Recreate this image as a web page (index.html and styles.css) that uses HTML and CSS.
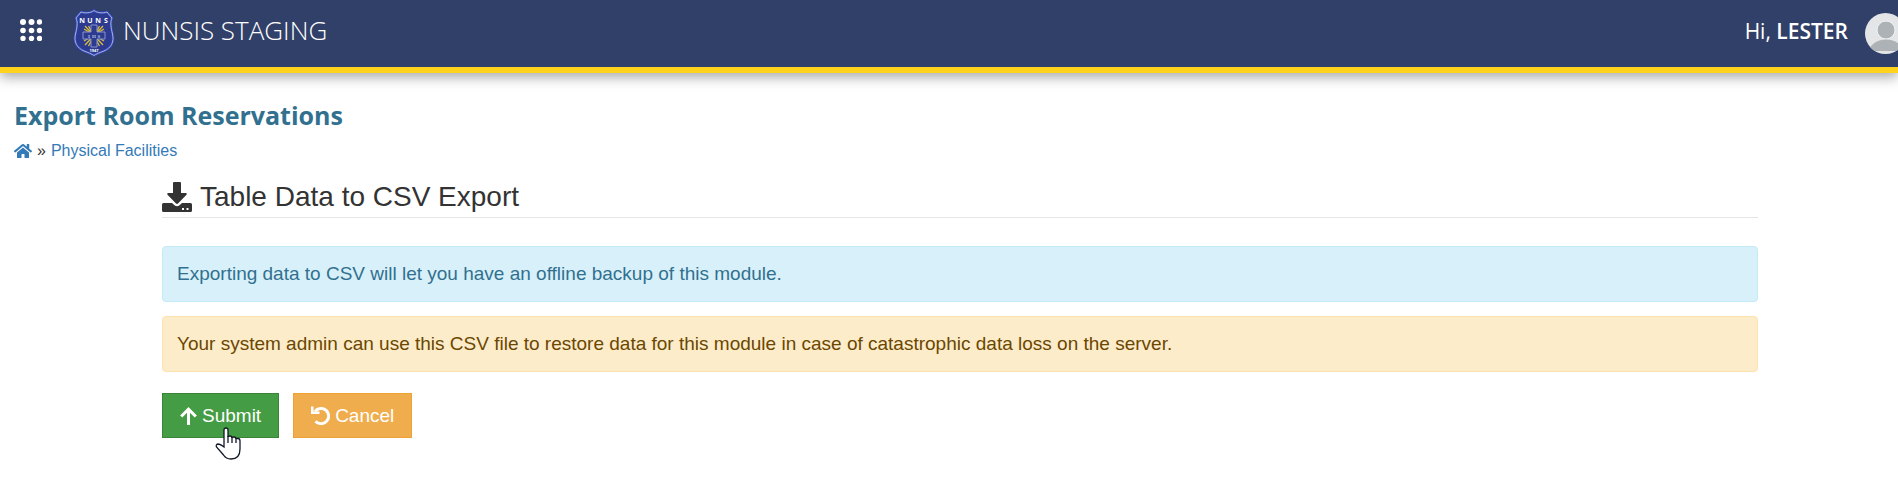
FILE: index.html
```html
<!DOCTYPE html>
<html lang="en">
<head>
    <meta charset="UTF-8">
    <title>Export Room Reservations</title>
    <link rel="stylesheet" href="styles.css">
</head>
<body>
    <header class="navbar">
        <button type="button" class="menu-btn" aria-label="Menu">
            <svg width="22" height="22" viewBox="0 0 22 22" fill="#fff">
                <circle cx="3" cy="3" r="3"/><circle cx="11.5" cy="3" r="3"/><circle cx="19.5" cy="3" r="2.7"/>
                <circle cx="3" cy="11.5" r="2.8"/><circle cx="11.5" cy="11.5" r="2.8"/><circle cx="19.5" cy="11.5" r="2.7"/>
                <circle cx="3" cy="19.5" r="2.7"/><circle cx="11.5" cy="19.5" r="2.7"/><circle cx="19.5" cy="19.5" r="2.7"/>
            </svg>
        </button>
        <a href="#" class="brand">
            <svg class="brand-logo" width="42" height="48" viewBox="0 0 42 48">
                <path d="M21 1.5C18 4 12 4.500 8 3L3 9C5 13 4 19 2.500 25C.5 33 4 39 11 42C15 43.500 19 45 21 46.500C23 45 27 43.500 31 42C38 39 41.500 33 39.500 25C38 19 37 13 39 9L34 3C30 4.500 24 4 21 1.500Z" fill="#2c3b8f" stroke="#3447b5" stroke-width="2.500"/>
                <path d="M21 1.5C18 4 12 4.500 8 3L3 9C5 13 4 19 2.500 25C.5 33 4 39 11 42C15 43.500 19 45 21 46.500C23 45 27 43.500 31 42C38 39 41.500 33 39.500 25C38 19 37 13 39 9L34 3C30 4.500 24 4 21 1.500Z" fill="none" stroke="#a9b3dc" stroke-width="1"/>
                <g stroke="#d9bd3c" stroke-width="1.300">
                    <path d="M12 17L30 36M30 17L12 36M15.500 17L26.500 37M26.500 17L15.500 37M11 20L31 32M31 20L11 32"/>
                </g>
                <path d="M18 16H24V23H32V30H24V38H18V30H10V23H18Z" fill="#2c3b8f" stroke="#8794cd" stroke-width="1"/>
                <text x="9 17 25 33" y="13.500" class="logo-name">NUNS</text>
                <text x="16 21 26" y="28.500" class="logo-ihs">IHS</text>
                <text x="21" y="43" class="logo-year">1947</text>
            </svg>
            <span>NUNSIS STAGING</span>
        </a>
        <a href="#" class="user">
            <span>Hi, <strong>LESTER</strong></span>
            <svg class="avatar" width="41" height="41" viewBox="0 0 41 41">
                <clipPath id="face"><circle cx="20.500" cy="20.500" r="20.500"/></clipPath>
                <g clip-path="url(#face)">
                    <rect width="41" height="41" fill="#e4e5e7"/>
                    <circle cx="21" cy="17" r="9" fill="#adb2b6" stroke="#f1f2f3" stroke-width="1"/>
                    <path d="M3 38C7 30 13 26.500 21 26.500S35 30 39 38Z" fill="#adb2b6"/>
                </g>
            </svg>
        </a>
    </header>

    <div class="page-head">
        <h1>Export Room Reservations</h1>
        <nav class="breadcrumb">
            <a href="#" aria-label="Home">
                <svg width="18" height="16" viewBox="0 0 576 512" fill="currentColor"><path d="M280.400 148.300L96 300.100V464a16 16 0 0 0 16 16l112-.3a16 16 0 0 0 16-16V368a16 16 0 0 1 16-16h64a16 16 0 0 1 16 16v95.600a16 16 0 0 0 16 16L464 480a16 16 0 0 0 16-16V300L295.700 148.300a12.200 12.200 0 0 0-15.300 0zM571.600 251.500L488 182.600V44.100a12 12 0 0 0-12-12h-56a12 12 0 0 0-12 12v72.600L318.500 43a48 48 0 0 0-61 0L4.300 251.500a12 12 0 0 0-1.600 16.900l25.500 31a12 12 0 0 0 16.900 1.600L280.400 107.200a12.200 12.200 0 0 1 15.300 0L531 301a12 12 0 0 0 16.900-1.600l25.500-31a12 12 0 0 0-1.800-16.900z"/></svg>
            </a>
            <span>»</span>
            <a href="#">Physical Facilities</a>
        </nav>
    </div>

    <main class="content">
        <h2>
            <svg width="30" height="30" viewBox="0 0 30 30" fill="currentColor"><path d="M11 1Q11 0 12 0H18Q19 0 19 1V11H24Q25.500 11.500 24.500 12.700L16 21.500Q15 22.300 14 21.500L5.500 12.700Q4.500 11.500 6 11H11Z"/><path d="M1.500 21H10L12.800 23.500Q15 25 17.200 23.500L20 21H28.500Q30 21 30 22.500V28.500Q30 30 28.500 30H1.500Q0 30 0 28.500V22.500Q0 21 1.500 21ZM20 26V28H22V26ZM24.500 26V28H26.500V26Z" fill-rule="evenodd"/></svg>
            Table Data to CSV Export
        </h2>
        <div class="alert alert-info">Exporting data to CSV will let you have an offline backup of this module.</div>
        <div class="alert alert-warning">Your system admin can use this CSV file to restore data for this module in case of catastrophic data loss on the server.</div>
        <form class="actions" action="#">
            <button type="submit" class="btn btn-submit">
                <svg width="17" height="18" viewBox="0 0 17 18" fill="none" stroke="#fff" stroke-width="3"><path d="M8.500 18V2.500M1.200 9.500L8.500 2.200L15.800 9.500"/></svg>
                Submit
            </button>
            <button type="button" class="btn btn-cancel">
                <svg width="19" height="19" viewBox="0 0 19 19"><path d="M4 5.500A7.600 7.600 0 1 1 4.500 15.200" fill="none" stroke="#fff" stroke-width="3"/><path d="M0 .5H2.500V5.500H8.500V8H0Z" fill="#fff"/></svg>
                Cancel
            </button>
            <svg class="pointer" width="26" height="33" viewBox="0 0 26 33"><path d="M9 18V3Q9 1 11 1T13 3V10Q13 9 15 9T17 11Q17 10 19 10T21 12Q21 11.500 23 11.500T25 14V22Q25 32 16 32Q11 32 8.500 28L1.500 20Q.5 17.500 3 17Q5 17 9 20Z" fill="#fff" stroke="#111827" stroke-width="1.300"/><path d="M13 9V16M17 10V16M21 11V16" stroke="#111827" stroke-width="1.300"/></svg>
        </form>
    </main>
</body>
</html>
```

FILE: styles.css
```css
* {
    box-sizing: border-box;
}

body {
    margin: 0;
    font-family: "Liberation Sans", Arial, sans-serif;
    font-size: 16px;
    color: #333;
    background: #fff;
    overflow-x: hidden;
}

a {
    color: #337ab7;
    text-decoration: none;
}

.navbar {
    display: flex;
    align-items: center;
    height: 73px;
    padding-left: 20px;
    background: #314068;
    border-bottom: 6px solid #ffd31c;
    box-shadow: 0 4px 12px rgba(0, 0, 0, 0.35);
    font-family: "Open Sans", "Noto Sans", sans-serif;
}

.menu-btn {
    display: flex;
    padding: 0;
    margin: 0 31px 8px 0;
    border: 0;
    background: none;
    cursor: pointer;
}

.brand {
    display: flex;
    align-items: center;
    gap: 8px;
    padding-bottom: 2px;
    color: #fff;
    font-size: 26px;
    font-weight: 300;
}

.brand span,
.user span {
    padding-bottom: 6px;
}

.logo-name,
.logo-ihs,
.logo-year {
    fill: #fff;
    text-anchor: middle;
    font-family: "Open Sans", sans-serif;
    font-weight: 700;
}

.logo-name {
    font-size: 7px;
}

.logo-ihs {
    font-family: "Liberation Serif", serif;
    font-size: 5px;
    fill: #b9c1e4;
}

.logo-year {
    font-size: 4px;
}

.user {
    display: flex;
    align-items: center;
    gap: 17px;
    margin-left: auto;
    margin-right: -8px;
    color: #fff;
    font-size: 21px;
    font-weight: 400;
}

.user strong {
    font-weight: 600;
}

.page-head {
    padding: 24px 14px 0;
}

h1 {
    margin: 0;
    font-family: "Open Sans", "Noto Sans", sans-serif;
    font-size: 25px;
    line-height: 36px;
    font-weight: 700;
    color: #31708f;
}

.breadcrumb {
    display: flex;
    align-items: center;
    gap: 5px;
    margin-top: 8px;
    line-height: 20px;
}

.breadcrumb svg {
    display: block;
}

.content {
    padding: 20px 140px 32px 162px;
}

h2 {
    display: flex;
    align-items: center;
    gap: 8px;
    margin: 0 0 28px;
    padding-bottom: 4px;
    border-bottom: 1px solid #e5e5e5;
    font-size: 28px;
    line-height: 32px;
    font-weight: 400;
}

.alert {
    margin-bottom: 14px;
    padding: 14px;
    border: 1px solid;
    border-radius: 4px;
    font-size: 19px;
    line-height: 26px;
}

.alert-info {
    color: #31708f;
    background: #d8f0fa;
    border-color: #c3ebf7;
}

.alert-warning {
    color: #6b4700;
    background: #fdecca;
    border-color: #fde1b0;
}

.actions {
    position: relative;
    display: flex;
    gap: 14px;
    margin-top: 21px;
}

.btn {
    display: flex;
    align-items: center;
    gap: 5px;
    padding: 0 17px;
    height: 45px;
    border: 1px solid;
    font-family: inherit;
    font-size: 19px;
    color: #fff;
    cursor: pointer;
}

.btn-submit {
    background: #449d44;
    border-color: #398439;
}

.btn-cancel {
    background: #f0ad4e;
    border-color: #eea236;
}

/* hand cursor resting on the submit button */
.pointer {
    position: absolute;
    left: 53px;
    top: 34px;
}
```
